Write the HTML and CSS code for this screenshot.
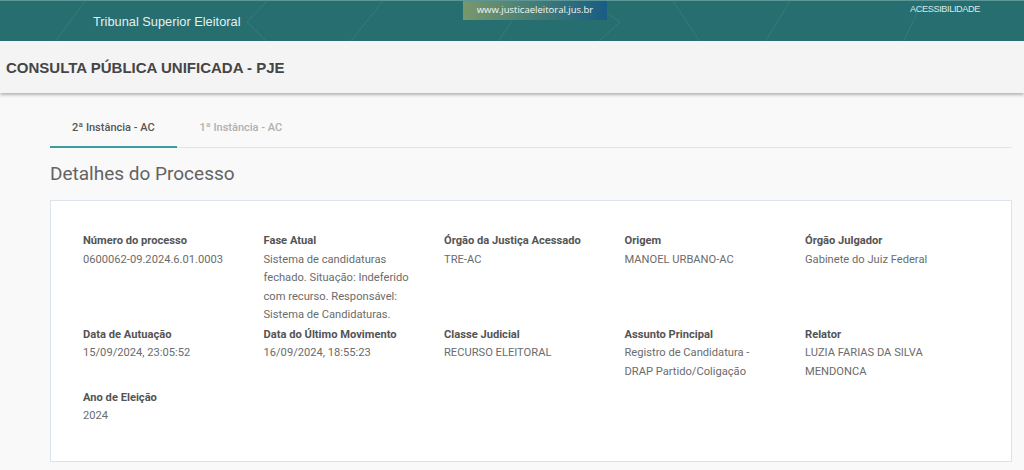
FILE: index.html
```html
<!DOCTYPE html>
<html lang="pt-BR">
<head>
    <meta charset="UTF-8">
    <meta name="viewport" content="width=device-width, initial-scale=1.0">
    <title>Consulta Pública Unificada - PJE</title>
    <link rel="stylesheet" href="styles.css">
</head>
<body>

    <div class="top-bar">
        <svg class="top-bar-lines" width="1024" height="41" viewBox="0 0 1024 41" aria-hidden="true">
            <path d="M55 41 L85 0 M267 0 L247 21 L267 41 M350 41 L383 0 M498 41 L512 20 M590 0 L620 21 L598 41 M673 0 L700 41 M765 41 L790 0 M903 41 L923 0"/>
        </svg>
        <span class="top-bar-title">Tribunal Superior Eleitoral</span>
        <a class="site-badge" href="#">www.justicaeleitoral.jus.br</a>
        <a class="access-link" href="#">ACESSIBILIDADE</a>
    </div>

    <header class="page-header">
        <h1>CONSULTA PÚBLICA UNIFICADA - PJE</h1>
    </header>

    <main class="content">
        <nav class="tabs">
            <a class="tab active" href="#">2ª Instância - AC</a>
            <a class="tab" href="#">1ª Instância - AC</a>
        </nav>

        <h2 class="section-title">Detalhes do Processo</h2>

        <section class="details-card">
            <div class="detail">
                <div class="detail-label">Número do processo</div>
                <div class="detail-value">0600062-09.2024.6.01.0003</div>
            </div>
            <div class="detail">
                <div class="detail-label">Fase Atual</div>
                <div class="detail-value">Sistema de candidaturas fechado. Situação: Indeferido com recurso. Responsável: Sistema de Candidaturas.</div>
            </div>
            <div class="detail">
                <div class="detail-label">Órgão da Justiça Acessado</div>
                <div class="detail-value">TRE-AC</div>
            </div>
            <div class="detail">
                <div class="detail-label">Origem</div>
                <div class="detail-value">MANOEL URBANO-AC</div>
            </div>
            <div class="detail">
                <div class="detail-label">Órgão Julgador</div>
                <div class="detail-value">Gabinete do Juiz Federal</div>
            </div>

            <div class="detail">
                <div class="detail-label">Data de Autuação</div>
                <div class="detail-value">15/09/2024, 23:05:52</div>
            </div>
            <div class="detail">
                <div class="detail-label">Data do Último Movimento</div>
                <div class="detail-value">16/09/2024, 18:55:23</div>
            </div>
            <div class="detail">
                <div class="detail-label">Classe Judicial</div>
                <div class="detail-value">RECURSO ELEITORAL</div>
            </div>
            <div class="detail">
                <div class="detail-label">Assunto Principal</div>
                <div class="detail-value">Registro de Candidatura - DRAP Partido/Coligação</div>
            </div>
            <div class="detail">
                <div class="detail-label">Relator</div>
                <div class="detail-value">LUZIA FARIAS DA SILVA MENDONCA</div>
            </div>

            <div class="detail">
                <div class="detail-label">Ano de Eleição</div>
                <div class="detail-value">2024</div>
            </div>
        </section>
    </main>

</body>
</html>
```

FILE: styles.css
```css
:root {
    --tse-teal: #266e6f;
    --accent-teal: #3a9d9e;
    --page-bg: #f9f9f9;
    --header-bg: #f4f4f4;
    --label-color: #545454;
    --value-color: #6b6b6b;
    --font-body: 'Roboto', 'Noto Sans', sans-serif;
    --font-arial: 'Liberation Sans', Arial, sans-serif;
}

body {
    margin: 0;
    background: var(--page-bg);
    font-family: var(--font-body);
    color: var(--value-color);
}

a {
    text-decoration: none;
}

/* --- TSE top bar --- */
.top-bar {
    position: relative;
    height: 41px;
    background: var(--tse-teal);
    border-top: 1px solid #5c9696;
    box-sizing: border-box;
    display: flex;
    align-items: flex-start;
    font-family: var(--font-arial);
    overflow: hidden;
}

.top-bar-lines {
    position: absolute;
    top: 0;
    left: 0;
}

.top-bar-lines path {
    fill: none;
    stroke: rgba(255, 255, 255, 0.09);
    stroke-width: 1;
}

.top-bar-title {
    position: relative;
    margin: 13px 0 0 93px;
    font-size: 12.8px;
    color: #e6eeee;
    width: 370px;
}

.site-badge {
    position: relative;
    width: 144px;
    height: 20px;
    margin-top: -1px;
    background: linear-gradient(90deg, #7a976d 0%, #3f7a76 55%, #195c85 100%);
    color: #f4f7f4;
    font-family: 'Open Sans', sans-serif;
    font-size: 9.5px;
    line-height: 20px;
    text-align: center;
}

.access-link {
    position: relative;
    margin: 3px 0 0 303px;
    font-size: 9.2px;
    color: #dbe8e8;
    letter-spacing: -0.4px;
}

/* --- Page header --- */
.page-header {
    background: var(--header-bg);
    height: 52px;
    display: flex;
    align-items: center;
    padding-left: 6px;
    box-shadow: 0 2px 3px rgba(0, 0, 0, 0.28);
}

.page-header h1 {
    margin: 0;
    font-family: var(--font-arial);
    font-size: 15px;
    font-weight: 700;
    color: #454545;
}

/* --- Main content --- */
.content {
    padding: 16px 12px 0 50px;
}

.tabs {
    display: flex;
    border-bottom: 1px solid #e4e4e4;
}

.tab {
    padding: 12px 22px 12px;
    font-size: 11px;
    font-weight: 500;
    color: #b0b0b0;
    border-bottom: 2px solid transparent;
    margin-bottom: -1px;
}

.tab + .tab {
    padding-left: 23px;
}

.tab.active {
    color: #555;
    border-bottom-color: var(--accent-teal);
}

.section-title {
    margin: 14px 0 15px;
    font-size: 19px;
    font-weight: 400;
    color: #636363;
}

.details-card {
    background: #fff;
    border: 1px solid #dde3ea;
    padding: 31px 20px 10px 32px;
    display: grid;
    grid-template-columns: repeat(5, 180.5px);
    row-gap: 1px;
}

.detail {
    min-height: 62px;
    font-size: 11.15px;
    line-height: 18.5px;
    padding-right: 30px;
}

.detail-label {
    font-weight: 700;
    color: var(--label-color);
}

.detail-value {
    color: var(--value-color);
}
```
